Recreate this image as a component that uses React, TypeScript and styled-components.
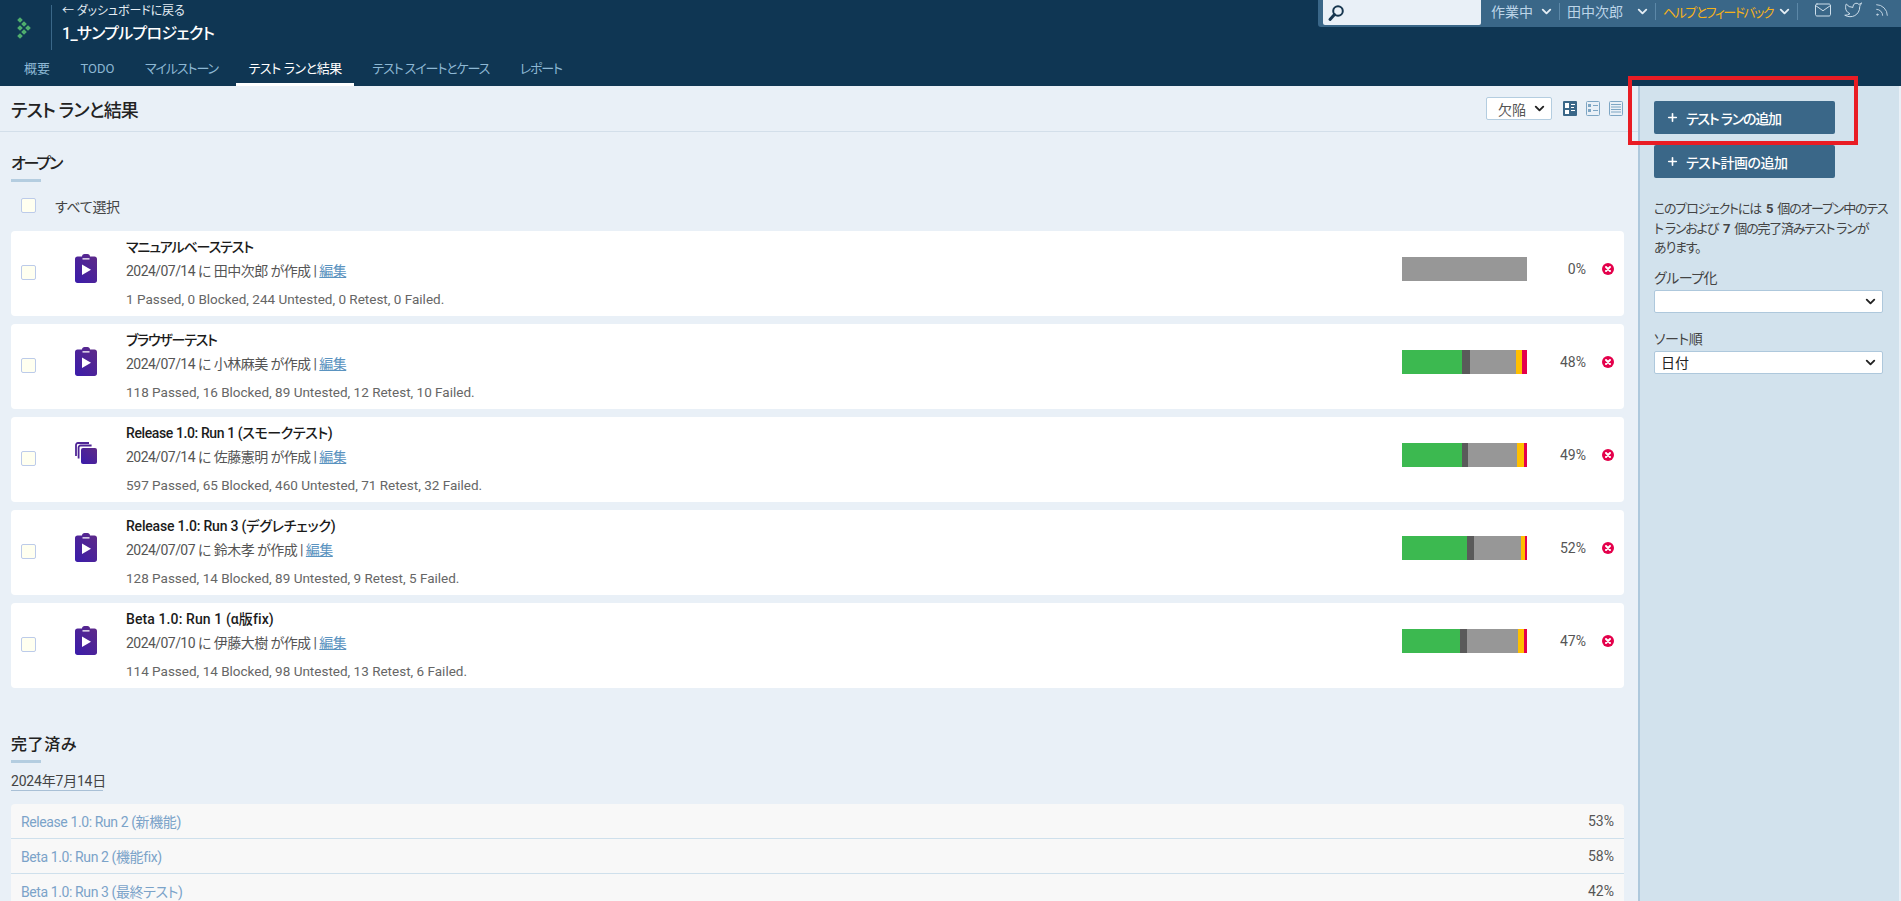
import * as React from 'react';
import styled, { createGlobalStyle } from 'styled-components';
import { FiMail, FiTwitter, FiRss } from 'react-icons/fi';
import { ChevronDown, Plus } from 'lucide-react';

const GlobalStyle = createGlobalStyle`
    html, body {
        margin: 0;
        height: 100%;
        overflow: hidden;
        background: #e9f0f7;
    }
    body {
        font-family: Roboto, "Noto Sans CJK JP", sans-serif;
        font-feature-settings: "palt";
        color: #333;
    }
`;

const Page = styled.div`
    width: 1901px;
    height: 901px;
    overflow: hidden;
    position: relative;
    display: flex;
    flex-direction: column;
`;

const Header = styled.header`
    height: 86px;
    flex: none;
    background: #0f3653;
    display: flex;
    flex-direction: column;
`;

const HeaderTop = styled.div`
    height: 55px;
    display: flex;
    align-items: flex-start;
`;

const LogoBox = styled.div`
    width: 52px;
    height: 45px;
    margin-top: 5px;
    border-right: 1px solid #3a6788;
    display: flex;
    align-items: center;
    justify-content: center;
    padding-right: 4px;
    box-sizing: border-box;
`;

const TitleBlock = styled.div`
    margin-left: 10px;
    flex: 1;
    color: #fff;
`;

const BackLink = styled.div`
    font-size: 12px;
    letter-spacing: -0.1px;
    line-height: 14px;
    margin-top: 4px;
    color: #e4edf4;
`;

const ProjectTitle = styled.div`
    font-size: 16px;
    font-weight: 500;
    letter-spacing: -0.7px;
    line-height: 20px;
    margin-top: 6px;
`;

const UserBar = styled.div`
    width: 583px;
    height: 27px;
    background: #3a6788;
    border-bottom-left-radius: 3px;
    display: flex;
    align-items: center;
    padding: 0 0 5px 5px;
    box-sizing: border-box;
`;

const SearchBox = styled.div`
    width: 158px;
    height: 25px;
    align-self: flex-start;
    background: #e9f0f7;
    border-radius: 0 0 2px 2px;
    display: flex;
    align-items: center;
    padding-left: 4px;
    box-sizing: border-box;
    margin-right: 10px;
`;

const BarMenu = styled.div<{ $accent?: boolean; $width: number }>`
    width: ${p => p.$width}px;
    height: 17px;
    flex: none;
    display: flex;
    align-items: center;
    font-size: ${p => (p.$accent ? 13 : 14)}px;
    letter-spacing: ${p => (p.$accent ? -1.5 : 0)}px;
    color: ${p => (p.$accent ? '#f5b21a' : '#bcd5e8')};
    border-right: 1px solid #5c88a8;
    padding-right: 5px;
    margin-right: 7px;
    box-sizing: border-box;
    justify-content: space-between;
    white-space: nowrap;

    svg {
        color: #e4edf4;
        flex: none;
    }
`;

const BarIcons = styled.div`
    margin: -3px 0 0 9px;
    display: flex;
    align-items: center;
    gap: 12px;
    color: #d3e2ee;
`;

const Tabs = styled.nav`
    height: 31px;
    display: flex;
    padding-left: 11.5px;
    gap: 5.5px;
`;

const Tab = styled.div<{ $active?: boolean; $spacing: number }>`
    padding: 0 12.5px;
    height: 31px;
    box-sizing: border-box;
    line-height: 27px;
    font-size: 13px;
    letter-spacing: ${p => p.$spacing}px;
    white-space: nowrap;
    color: ${p => (p.$active ? '#fff' : '#8db8d4')};
    border-bottom: 3px solid ${p => (p.$active ? '#fff' : 'transparent')};
`;

const Body = styled.div`
    flex: 1;
    display: flex;
    min-height: 0;
`;

const Content = styled.main`
    width: 1638px;
    flex: none;
`;

const PageHead = styled.div`
    height: 46px;
    box-sizing: border-box;
    border-bottom: 1px solid #d3dfea;
    display: flex;
    align-items: center;
    padding: 0 15px 0 11px;
`;

const PageTitle = styled.h1`
    flex: 1;
    margin: 0;
    font-size: 18px;
    font-weight: 500;
    letter-spacing: -0.8px;
    color: #222;
`;

const FilterSelect = styled.div`
    width: 66px;
    height: 23px;
    margin-right: 11px;
    padding-left: 11px;
    background: #fff;
    border: 1px solid #b4cde0;
    border-radius: 2px;
    box-sizing: border-box;
    display: flex;
    align-items: center;
    gap: 6px;
    font-size: 14px;
    color: #555;

    svg {
        color: #222;
    }
`;

const ViewIcons = styled.div`
    display: flex;
    gap: 9px;
`;

const ViewIcon = styled.svg`
    display: block;
`;

const Section = styled.section`
    padding: 0 14px 0 11px;
`;

const SectionTitle = styled.h2<{ $top: number; $spacing: number }>`
    margin: ${p => p.$top}px 0 0;
    font-size: 16px;
    font-weight: 500;
    letter-spacing: ${p => p.$spacing}px;
    line-height: 22px;
    color: #222;

    &::after {
        content: '';
        display: block;
        width: 30px;
        height: 3px;
        margin-top: 4px;
        background: #b4cde0;
    }
`;

const SelectAll = styled.div`
    height: 15px;
    margin: 16px 0 18px 10px;
    display: flex;
    align-items: center;
    gap: 19px;
    font-size: 14px;
    letter-spacing: -0.3px;
    color: #444;
`;

const Checkbox = styled.span`
    display: block;
    flex: none;
    width: 15px;
    height: 15px;
    box-sizing: border-box;
    border: 1px solid #bccbea;
    border-radius: 2px;
    background: #fffff0;
`;

const RunCard = styled.div`
    height: 85px;
    margin-bottom: 8px;
    padding: 0 10px;
    box-sizing: border-box;
    background: #fff;
    border-radius: 4px;
    display: flex;
    align-items: flex-start;
`;

const CardCheck = styled.div`
    margin-top: 34px;
`;

const CardIcon = styled.div<{ $top: number }>`
    margin: ${p => p.$top}px 0 0 39px;
    width: 22px;
    flex: none;
`;

const CardBody = styled.div`
    flex: 1;
    margin-left: 29px;
    padding-top: 6px;
`;

const RunTitle = styled.div<{ $spacing: number }>`
    font-size: 14px;
    font-weight: 500;
    letter-spacing: ${p => p.$spacing}px;
    line-height: 20px;
    color: #1b1b1b;
`;

const RunMeta = styled.div`
    font-size: 14px;
    letter-spacing: -0.55px;
    line-height: 20px;
    margin-top: 4px;
    color: #555;

    a {
        color: #5a93c0;
        text-decoration: underline;
    }
`;

const RunStats = styled.div`
    font-size: 13.5px;
    line-height: 18px;
    margin-top: 9px;
    color: #666;
`;

const Progress = styled.div`
    width: 125px;
    height: 24px;
    margin-top: 26px;
    display: flex;
    flex: none;
`;

const Segment = styled.div<{ $color: string; $grow?: boolean }>`
    background: ${p => p.$color};
    flex-grow: ${p => (p.$grow ? 1 : 0)};
`;

const Percent = styled.div`
    width: 59px;
    margin-top: 28px;
    text-align: right;
    font-size: 14px;
    line-height: 20px;
    color: #555;
`;

const RemoveIcon = styled.svg`
    display: block;
    flex: none;
    margin: 32px 0 0 16px;
`;

const DateLine = styled.div`
    width: 92px;
    margin-top: 10px;
    font-size: 14px;
    letter-spacing: -0.2px;
    line-height: 17px;
    color: #444;
    white-space: nowrap;
    border-bottom: 1px solid #a9c0d6;
`;

const DoneList = styled.div`
    margin-top: 13px;
    background: #f8f8f8;
    border-radius: 4px 4px 0 0;
`;

const DoneRow = styled.div`
    height: 35px;
    padding: 0 10px;
    box-sizing: border-box;
    border-bottom: 1px solid #cfe0ec;
    display: flex;
    align-items: center;
    justify-content: space-between;
    font-size: 14px;
    color: #555;

    a {
        color: #7ba3c9;
        letter-spacing: -0.4px;
    }
`;

const Sidebar = styled.aside`
    width: 261px;
    flex: none;
    background: #d2e2ed;
    border-left: 2px solid #aec8dc;
    box-sizing: border-box;
    padding: 15px 16px 0 14px;
`;

const ActionButton = styled.div<{ $spacing: number }>`
    width: 181px;
    height: 33px;
    margin-bottom: 11px;
    background: #3a6788;
    border-radius: 2px;
    color: #fff;
    font-size: 14px;
    font-weight: 500;
    letter-spacing: ${p => p.$spacing}px;
    display: flex;
    align-items: center;
    gap: 7px;
    padding-left: 12px;
    box-sizing: border-box;
`;

const SideText = styled.p`
    margin: 21px 0 0;
    font-size: 13px;
    letter-spacing: -1.2px;
    line-height: 19.5px;
    color: #444;
    white-space: nowrap;

    b {
        font-weight: 700;
        margin: 0 3px;
    }
`;

const SideLabel = styled.div<{ $top: number }>`
    margin-top: ${p => p.$top}px;
    font-size: 14px;
    letter-spacing: -0.5px;
    line-height: 20px;
    color: #444;
`;

const SideSelect = styled.div`
    height: 23px;
    margin-top: 2px;
    background: #fff;
    border: 1px solid #aec8dc;
    border-radius: 2px;
    box-sizing: border-box;
    display: flex;
    align-items: center;
    justify-content: space-between;
    padding: 0 4px 0 6px;
    font-size: 14px;
    color: #222;
`;

const Callout = styled.div`
    position: absolute;
    left: 1628px;
    top: 76px;
    width: 230px;
    height: 69px;
    box-sizing: border-box;
    border: 4px solid #e91c24;
    pointer-events: none;
`;

const PlayClipboard: React.FC<{ id: string }> = ({ id }) => (
    <svg width="22" height="29" viewBox="0 0 22 29">
        <defs>
            <linearGradient id={id} x1="1" y1="0" x2="0" y2="1">
                <stop offset="0" stopColor="#5f2a86" />
                <stop offset="1" stopColor="#3a1cab" />
            </linearGradient>
        </defs>
        <path
            fill={`url(#${id})`}
            fillRule="evenodd"
            d="M7 2.5C7 1 8.2 0 9.5 0h3C13.8 0 15 1 15 2.5h4.5C21 2.5 22 3.6 22 5v21.5c0 1.4-1 2.5-2.5 2.5h-17C1 29 0 27.9 0 26.5V5c0-1.4 1-2.5 2.5-2.5H7zM7.500 4.200v1.200h7V4.200h-7zM7 10.500v10.500l9-5.250z"
        />
    </svg>
);

const StackIcon: React.FC<{ id: string }> = ({ id }) => (
    <svg width="22" height="22" viewBox="0 0 22 22">
        <defs>
            <linearGradient id={id} x1="1" y1="0" x2="0" y2="1">
                <stop offset="0" stopColor="#5f2a86" />
                <stop offset="1" stopColor="#3a1cab" />
            </linearGradient>
        </defs>
        <path
            fill="none"
            stroke="#4f2596"
            strokeWidth="1.800"
            d="M1 14V3c0-1.200.8-2 2-2h11M3.600 16.500V5.500c0-1.200.8-2 2-2h11"
        />
        <rect x="6" y="6" width="16" height="16" rx="2" fill={`url(#${id})`} />
    </svg>
);

const LogoMark = () => (
    <svg width="14" height="22" viewBox="0 0 14 22">
        {[
            [3, 3],
            [3, 11],
            [3, 19],
            [7, 7],
            [7, 15],
            [11, 11],
        ].map(([x, y]) => (
            <rect
                key={`${x}-${y}`}
                x={x - 2}
                y={y - 2}
                width="4"
                height="4"
                fill="#4fae6e"
                transform={`rotate(45 ${x} ${y})`}
            />
        ))}
    </svg>
);

const SearchGlyph = () => (
    <svg width="18" height="18" viewBox="0 0 18 18">
        <circle cx="11" cy="7" r="4.800" fill="none" stroke="#17364f" strokeWidth="2" />
        <path d="M7.500 10.500L3 15.500" stroke="#17364f" strokeWidth="3" strokeLinecap="round" />
    </svg>
);

const Remove = () => (
    <RemoveIcon width="12" height="12" viewBox="0 0 12 12">
        <circle cx="6" cy="6" r="6" fill="#e4004b" />
        <path d="M4 4l4 4M8 4l-4 4" stroke="#fff" strokeWidth="2" strokeLinecap="round" />
    </RemoveIcon>
);

const CardView = () => (
    <ViewIcon width="14" height="15" viewBox="0 0 14 15">
        <rect width="14" height="15" rx="1" fill="#3a6788" />
        <path d="M2 2h4v5H2zM2 9h4v4H2zM8 3h4v1H8zM8 6h3v1H8zM8 9h4v1H8z" fill="#fff" />
    </ViewIcon>
);

const CompactView = () => (
    <ViewIcon width="14" height="15" viewBox="0 0 14 15">
        <rect x=".5" y=".5" width="13" height="14" rx="1" fill="none" stroke="#7ea6c4" />
        <path d="M2 3h3v3H2zM2 8h3v3H2zM7 4h5v1H7zM7 9h5v1H7z" fill="#7ea6c4" />
    </ViewIcon>
);

const ListView = () => (
    <ViewIcon width="14" height="15" viewBox="0 0 14 15">
        <rect x=".5" y=".5" width="13" height="14" rx="1" fill="none" stroke="#7ea6c4" />
        <path d="M2 3h10v1H2zM2 5.500h10v1H2zM2 8h10v1H2zM2 10.500h10v1H2z" fill="#7ea6c4" />
    </ViewIcon>
);

const tabs = [
    { label: '概要', spacing: 0 },
    { label: 'TODO', spacing: 0 },
    { label: 'マイルストーン', spacing: -1.1 },
    { label: 'テスト ランと結果', spacing: -0.4, active: true },
    { label: 'テスト スイートとケース', spacing: -1.1 },
    { label: 'レポート', spacing: -1.25 },
];

const openRuns = [
    { title: 'マニュアルベーステスト', spacing: -1.1, date: '2024/07/14', author: '田中次郎', counts: [1, 0, 244, 0, 0], percent: 0, icon: 'run' },
    { title: 'ブラウザーテスト', spacing: -1.2, date: '2024/07/14', author: '小林麻美', counts: [118, 16, 89, 12, 10], percent: 48, icon: 'run' },
    { title: 'Release 1.0: Run 1 (スモークテスト)', spacing: -0.4, date: '2024/07/14', author: '佐藤憲明', counts: [597, 65, 460, 71, 32], percent: 49, icon: 'plan' },
    { title: 'Release 1.0: Run 3 (デグレチェック)', spacing: -0.2, date: '2024/07/07', author: '鈴木孝', counts: [128, 14, 89, 9, 5], percent: 52, icon: 'run' },
    { title: 'Beta 1.0: Run 1 (α版fix)', spacing: 0.1, date: '2024/07/10', author: '伊藤大樹', counts: [114, 14, 98, 13, 6], percent: 47, icon: 'run' },
];

const segmentColors = ['#3cb950', '#5a5a5a', '#979797', '#ffbf00', '#e4004b'];

const doneRuns = [
    { title: 'Release 1.0: Run 2 (新機能)', percent: 53 },
    { title: 'Beta 1.0: Run 2 (機能fix)', percent: 58 },
    { title: 'Beta 1.0: Run 3 (最終テスト)', percent: 42 },
];

const chevron = <ChevronDown size={15} strokeWidth={3} />;

export default function App() {
    return (
        <Page>
            <GlobalStyle />
            <Header>
                <HeaderTop>
                    <LogoBox>
                        <LogoMark />
                    </LogoBox>
                    <TitleBlock>
                        <BackLink>← ダッシュボードに戻る</BackLink>
                        <ProjectTitle>1_サンプルプロジェクト</ProjectTitle>
                    </TitleBlock>
                    <UserBar>
                        <SearchBox>
                            <SearchGlyph />
                        </SearchBox>
                        <BarMenu $width={69}>作業中 {chevron}</BarMenu>
                        <BarMenu $width={89}>田中次郎 {chevron}</BarMenu>
                        <BarMenu $accent $width={135}>ヘルプとフィードバック {chevron}</BarMenu>
                        <BarIcons>
                            <FiMail size={18} strokeWidth={1.3} />
                            <FiTwitter size={18} strokeWidth={1.3} />
                            <FiRss size={16} strokeWidth={1.3} />
                        </BarIcons>
                    </UserBar>
                </HeaderTop>
                <Tabs>
                    {tabs.map(tab => (
                        <Tab key={tab.label} $active={tab.active} $spacing={tab.spacing}>{tab.label}</Tab>
                    ))}
                </Tabs>
            </Header>
            <Body>
                <Content>
                    <PageHead>
                        <PageTitle>テスト ランと結果</PageTitle>
                        <FilterSelect>欠陥 <ChevronDown size={15} strokeWidth={3} /></FilterSelect>
                        <ViewIcons>
                            <CardView />
                            <CompactView />
                            <ListView />
                        </ViewIcons>
                    </PageHead>
                    <Section>
                        <SectionTitle $top={21} $spacing={-2}>オープン</SectionTitle>
                        <SelectAll>
                            <Checkbox />
                            すべて選択
                        </SelectAll>
                        {openRuns.map((run, i) => {
                            const total = run.counts.reduce((a, b) => a + b, 0);
                            const [passed, blocked, untested, retest, failed] = run.counts;
                            return (
                                <RunCard key={run.title}>
                                    <CardCheck>
                                        <Checkbox />
                                    </CardCheck>
                                    <CardIcon $top={run.icon === 'run' ? 23 : 25}>
                                        {run.icon === 'run' ? <PlayClipboard id={`run-${i}`} /> : <StackIcon id={`run-${i}`} />}
                                    </CardIcon>
                                    <CardBody>
                                        <RunTitle $spacing={run.spacing}>{run.title}</RunTitle>
                                        <RunMeta>
                                            {run.date} に {run.author} が作成 | <a href="#">編集</a>
                                        </RunMeta>
                                        <RunStats>
                                            {passed} Passed, {blocked} Blocked, {untested} Untested, {retest} Retest, {failed} Failed.
                                        </RunStats>
                                    </CardBody>
                                    <Progress>
                                        {run.counts.map((count, j) => (
                                            <Segment
                                                key={j}
                                                $color={segmentColors[j]}
                                                $grow={j === 2}
                                                style={{ width: Math.floor((count / total) * 125) }}
                                            />
                                        ))}
                                    </Progress>
                                    <Percent>{run.percent}%</Percent>
                                    <Remove />
                                </RunCard>
                            );
                        })}
                        <SectionTitle $top={46} $spacing={0.6}>完了済み</SectionTitle>
                        <DateLine>2024年7月14日</DateLine>
                        <DoneList>
                            {doneRuns.map(run => (
                                <DoneRow key={run.title}>
                                    <a>{run.title}</a>
                                    <span>{run.percent}%</span>
                                </DoneRow>
                            ))}
                        </DoneList>
                    </Section>
                </Content>
                <Sidebar>
                    <ActionButton $spacing={-1.2}><Plus size={13} strokeWidth={3} /> テスト ランの追加</ActionButton>
                    <ActionButton $spacing={-0.5}><Plus size={13} strokeWidth={3} /> テスト計画の追加</ActionButton>
                    <SideText>
                        このプロジェクトには <b>5</b> 個のオープン中のテス<br />
                        ト ランおよび <b>7</b> 個の完了済みテスト ランが<br />
                        あります。
                    </SideText>
                    <SideLabel $top={10}>グループ化</SideLabel>
                    <SideSelect><span />{chevron}</SideSelect>
                    <SideLabel $top={16}>ソート順</SideLabel>
                    <SideSelect>日付 {chevron}</SideSelect>
                </Sidebar>
            </Body>
            <Callout />
        </Page>
    );
}
